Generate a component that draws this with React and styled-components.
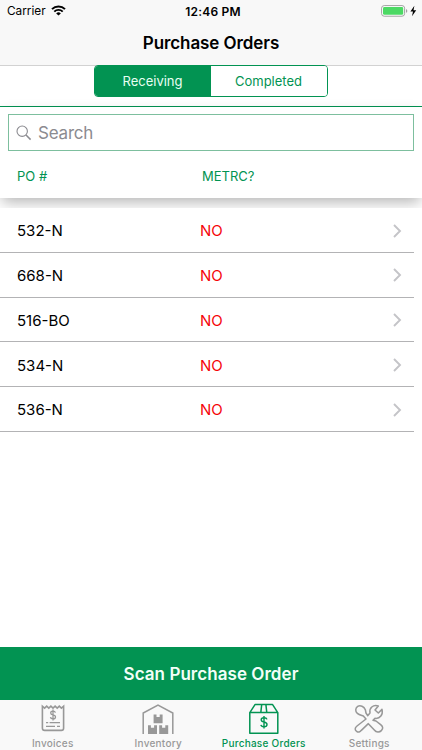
import { useState } from "react";
import styled, { createGlobalStyle } from "styled-components";

const green = "#029352";

const orders = ["532-N", "668-N", "516-BO", "534-N", "536-N"];

const tabs = [
  { name: "Invoices", icon: InvoiceIcon },
  { name: "Inventory", icon: InventoryIcon },
  { name: "Purchase Orders", icon: BoxIcon },
  { name: "Settings", icon: ToolsIcon },
];

export default function App() {
  const [segment, setSegment] = useState("Receiving");
  const [tab, setTab] = useState("Purchase Orders");

  return (
    <Screen>
      <GlobalStyle />
      <NavBar>
        <StatusBar>
          <Carrier>
            Carrier
            <WifiIcon />
          </Carrier>
          <Clock>12:46 PM</Clock>
          <BatteryIcon />
        </StatusBar>
        <Title>Purchase Orders</Title>
      </NavBar>
      <SegmentBar>
        <Segments>
          {["Receiving", "Completed"].map((name) => (
            <Segment
              key={name}
              $active={segment === name}
              onClick={() => setSegment(name)}
            >
              {name}
            </Segment>
          ))}
        </Segments>
      </SegmentBar>
      <FilterPanel>
        <SearchBox>
          <SearchIcon />
          <SearchInput placeholder="Search" />
        </SearchBox>
        <Columns>
          <span>PO #</span>
          <span>METRC?</span>
        </Columns>
      </FilterPanel>
      <List>
        {orders.map((po) => (
          <Row key={po}>
            <Number>{po}</Number>
            <Metrc>NO</Metrc>
            <Chevron />
          </Row>
        ))}
      </List>
      <ScanButton>Scan Purchase Order</ScanButton>
      <TabBar>
        {tabs.map(({ name, icon: Icon }) => (
          <Tab key={name} $active={tab === name} onClick={() => setTab(name)}>
            <Icon />
            <TabLabel>{name}</TabLabel>
          </Tab>
        ))}
      </TabBar>
    </Screen>
  );
}

function WifiIcon() {
  return (
    <svg width="15" height="11" viewBox="0 0 15 11" fill="none" stroke="#000">
      <path d="M1 4.1a9.2 9.2 0 0 1 13 0" strokeWidth="2" />
      <path d="M3.3 6.6a5.9 5.9 0 0 1 8.4 0" strokeWidth="1.9" />
      <path d="M7.5 10.6 5.2 8.4a3.3 3.3 0 0 1 4.6 0z" fill="#000" stroke="none" />
    </svg>
  );
}

function BatteryIcon() {
  return (
    <svg width="37" height="12" viewBox="0 0 37 12">
      <rect x=".6" y=".6" width="23" height="10.6" rx="2.6" fill="#fff" stroke="#a0a0a0" />
      <rect x="2" y="2" width="20.2" height="7.8" rx="1.4" fill="#4cd964" />
      <path d="M25 4v3.8q1.3-.6 1.3-1.9T25 4z" fill="#a0a0a0" />
      <path d="M33.4.8 29.4 6.6h2.6l-1 4.6 4.2-6h-2.7z" fill="#000" />
    </svg>
  );
}

function SearchIcon() {
  return (
    <svg width="16" height="16" viewBox="0 0 16 16" fill="none" stroke="#8b8b90">
      <circle cx="6.2" cy="6.2" r="5.2" strokeWidth="1.1" />
      <path d="m10 10 4.6 4.6" strokeWidth="1.5" />
    </svg>
  );
}

function Chevron() {
  return (
    <svg width="9" height="14" viewBox="0 0 9 14" fill="none" stroke="#c4c4c8">
      <path d="m1 1 6 6-6 6" strokeWidth="1.9" />
    </svg>
  );
}

function InvoiceIcon() {
  return (
    <svg width="32" height="32" viewBox="0 0 32 32" fill="none" stroke="currentColor">
      <path
        d="M5.4 3.2v22q0 2.2 2.2 2.2h16.8q2.2 0 2.2-2.2v-22l-2.2 2-2.1-2-2.1 2-2.1-2-2.1 2-2.1-2-2.1 2-2.1-2-2.1 2z"
        strokeWidth="1.6"
      />
      <path
        d="M18.4 9.6q-.4-1.5-2.4-1.5-2.3 0-2.3 1.8 0 1.5 2.3 2 2.5.5 2.5 2.1 0 1.9-2.5 1.9-2.3 0-2.6-1.7M16 6.6v10.8"
        strokeWidth="1.3"
      />
      <path d="M9 19.6h2.2M12.6 19.6H23M9 23.4h9M20 23.4h3" strokeWidth="1.4" />
    </svg>
  );
}

function InventoryIcon() {
  return (
    <svg width="32" height="32" viewBox="0 0 32 32" fill="none">
      <path d="M1.2 31V10L16 2l14.8 8v21" stroke="currentColor" strokeWidth="1.5" />
      <g fill="currentColor">
        <path d="M11.6 11.4h2.9v2.6h3.2v-2.6h2.9v8.8h-9z" />
        <path d="M6 22.2h2.9v2.6h3.2v-2.6H15V31H6z" />
        <path d="M17.2 22.2h2.9v2.6h3.2v-2.6h2.9V31h-9z" />
      </g>
    </svg>
  );
}

function BoxIcon() {
  return (
    <svg width="32" height="32" viewBox="0 0 32 32" fill="none" stroke="currentColor">
      <path
        d="M1.8 9.6v20.6h28V9.6zM1.8 9.6 7 1.6h17.6l5.2 8M12.8 9.6l.9-8M18.8 9.6l-.9-8"
        strokeWidth="1.5"
        strokeLinejoin="round"
      />
      <path
        d="M19 16.4q-.5-1.7-3-1.7-2.8 0-2.8 2 0 1.8 2.8 2.3 3 .6 3 2.5 0 2.2-3 2.2-2.7 0-3.1-1.9M16 12.9v12.5"
        strokeWidth="1.4"
      />
    </svg>
  );
}

function ToolsIcon() {
  return (
    <svg
      width="32"
      height="32"
      viewBox="25 17 96 96"
      fill="none"
      stroke="currentColor"
      strokeWidth="4.6"
      strokeLinejoin="round"
    >
      <path d="M64 65 37 86C29 92 31 99 36 102C41 106 46 104 50 99L71 79 89 98C95 106 105 105 110 100C117 93 114 87 108 82L94 71 85 69 91 63C106 65 116 52 112 36L101 47 91 38 101 26C85 21 73 32 76 47L69 55 64 47 62 37C58 27 47 23 39 27C32 32 31 42 38 48C44 53 51 54 56 56Z" />
    </svg>
  );
}

const GlobalStyle = createGlobalStyle`
  * {
    box-sizing: border-box;
  }
  body {
    margin: 0;
    background: #fff;
    font-family: Inter, "Liberation Sans", sans-serif;
  }
  button,
  input {
    font-family: inherit;
    border: none;
    padding: 0;
    background: none;
  }
  svg {
    display: block;
    flex-shrink: 0;
  }
`;

const Screen = styled.div`
  width: 100%;
  height: 100vh;
  display: flex;
  flex-direction: column;
  overflow: hidden;
  background: #fff;
  color: #000;
`;

const NavBar = styled.header`
  height: 66px;
  flex-shrink: 0;
  background: #f8f8f8;
  border-bottom: 1px solid #d2d2d2;
`;

const StatusBar = styled.div`
  height: 22px;
  display: grid;
  grid-template-columns: 1fr auto 1fr;
  align-items: center;
  padding: 0 4px 0 7px;

  > svg {
    justify-self: end;
    margin-top: -1px;
  }
`;

const Carrier = styled.div`
  display: flex;
  align-items: center;
  gap: 5px;
  font-size: 11.8px;

  > svg {
    margin-top: -2px;
  }
`;

const Clock = styled.div`
  font-size: 12px;
  font-weight: 600;
  letter-spacing: 0.2px;
  margin-right: -1px;
`;

const Title = styled.h1`
  margin: 0;
  height: 43px;
  line-height: 43px;
  text-align: center;
  font-size: 17px;
  font-weight: 600;
  letter-spacing: -0.08px;
`;

const SegmentBar = styled.div`
  height: 41px;
  flex-shrink: 0;
  display: flex;
  justify-content: center;
  border-bottom: 1px solid ${green};
`;

const Segments = styled.div`
  width: 234px;
  height: 32px;
  margin-top: -1px;
  display: flex;
  border: 1px solid ${green};
  border-radius: 4px;
  overflow: hidden;
`;

const Segment = styled.button`
  flex: 1;
  padding-right: 1px;
  font-size: 13px;
  color: ${(props) => (props.$active ? "#e8fff3" : green)};
  background: ${(props) => (props.$active ? green : "#fff")};
`;

const FilterPanel = styled.section`
  height: 91px;
  flex-shrink: 0;
  padding: 7px 8px 0;
  background: #fff;
  box-shadow: 0 6px 14px -2px rgba(0, 0, 0, 0.3);
`;

const SearchBox = styled.label`
  height: 37px;
  display: flex;
  align-items: center;
  gap: 6px;
  padding-left: 7px;
  border: 1px solid #7dbf9e;
`;

const SearchInput = styled.input`
  flex: 1;
  min-width: 0;
  outline: none;
  font-size: 17px;
  letter-spacing: -0.2px;

  &::placeholder {
    color: #8b8b90;
    opacity: 1;
  }
`;

const Columns = styled.div`
  display: grid;
  grid-template-columns: 185px 1fr;
  align-items: center;
  height: 49px;
  padding-left: 9px;
  font-size: 13px;
  color: ${green};
`;

const List = styled.div`
  position: relative;
  flex: 1;
  margin-top: 10px;
  background: #fff;
`;

const Row = styled.div`
  height: 44.8px;
  margin-right: 8px;
  padding: 1.6px 12px 0 17px;
  display: grid;
  grid-template-columns: 183px 1fr auto;
  align-items: center;
  border-bottom: 1px solid #b3b3b5;
`;

const Number = styled.span`
  font-size: 15px;
`;

const Metrc = styled.span`
  font-size: 15px;
  color: #f5050a;
`;

const ScanButton = styled.button`
  height: 53px;
  flex-shrink: 0;
  background: ${green};
  color: #f2fff8;
  font-size: 17px;
  font-weight: 600;
  letter-spacing: 0.05px;
`;

const TabBar = styled.nav`
  height: 50px;
  flex-shrink: 0;
  display: grid;
  grid-template-columns: repeat(4, 1fr);
  background: #f9f9f9;
`;

const Tab = styled.button`
  display: flex;
  flex-direction: column;
  align-items: center;
  padding-top: 3px;
  color: ${(props) => (props.$active ? green : "#989898")};
`;

const TabLabel = styled.span`
  margin-top: 2px;
  line-height: 12px;
  font-size: 10px;
  font-weight: 500;
  letter-spacing: 0.25px;
  white-space: nowrap;
`;
